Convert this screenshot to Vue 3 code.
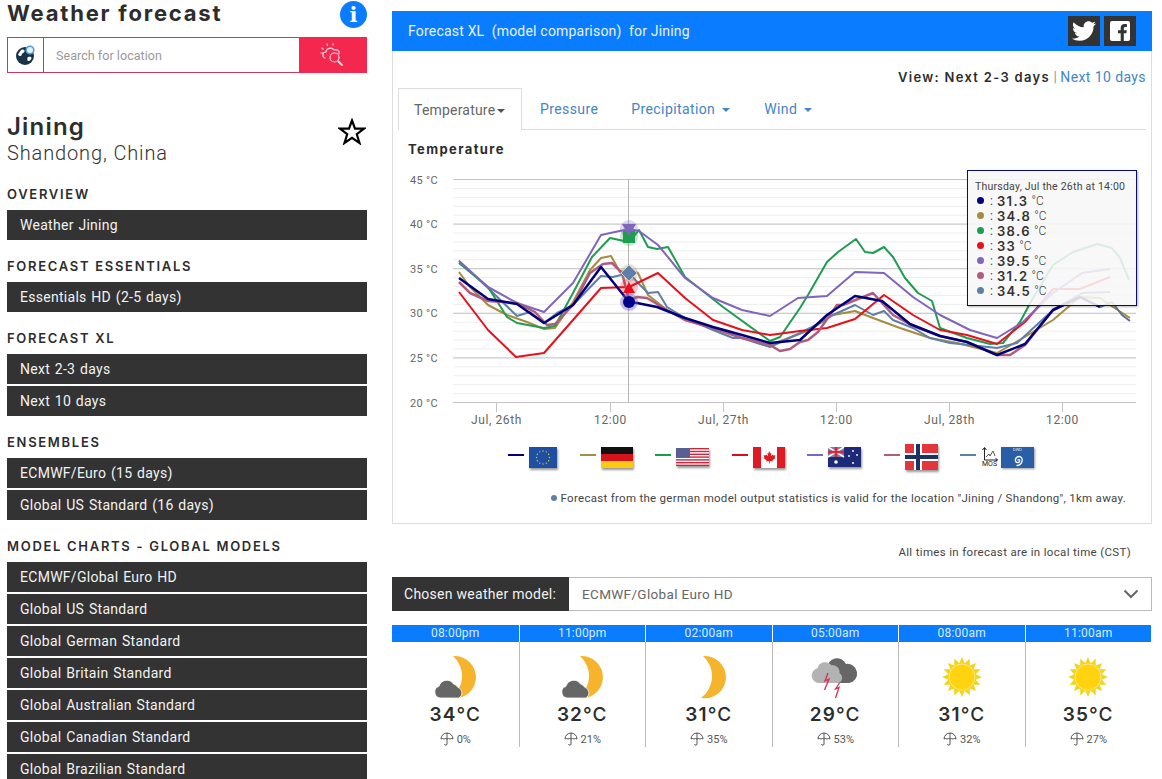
<template>
  <div class="page">
    <aside class="side">
      <div class="brand">
        <h1>Weather forecast</h1>
        <span class="info">i</span>
      </div>
      <div class="search">
        <span class="search-globe">
          <svg width="22" height="22" viewBox="0 0 22 22">
            <circle cx="10" cy="12" r="9" fill="#1b3348" />
            <path d="M6 6c2-1 4 0 3.500 1.500S7 9 6.500 11 4 12 3 10.500zM13 13c2-.5 3.500 0 3.500 1s-1.500 3-3 3-1.500-2.500-.5-4z" fill="#fff" />
            <circle cx="15" cy="6" r="3.800" fill="#dff0fb" stroke="#4f9fd8" stroke-width="1.600" />
          </svg>
        </span>
        <span class="search-text">Search for location</span>
        <span class="search-btn">
          <svg width="28" height="28" viewBox="0 0 28 28" fill="none" stroke="#ffd5de" stroke-width="1.200" stroke-linecap="round">
            <path d="M6 17c-3-1-3-6 1-6 0-4 6-5 8-2 3-1 6 1 5 4" />
            <circle cx="15.500" cy="16.500" r="4.500" />
            <path d="M19 20l4 4" stroke-width="2" />
            <path d="M3 7l1.500 1.500M8 3l.7 2M14 2.500v2M2 12h1.500" stroke-dasharray="1.500 1" />
          </svg>
        </span>
      </div>
      <div class="place">
        <div>
          <div class="city">Jining</div>
          <div class="region">Shandong, China</div>
        </div>
        <svg class="star" width="28" height="27" viewBox="0 0 28 27">
          <polygon points="14,2.500 17,10.600 26,10.600 18.800,16.200 21.500,25 14,19.800 6.500,25 9.200,16.200 2,10.600 11,10.600" fill="#fff" stroke="#000" stroke-width="2.200" />
        </svg>
      </div>
      <section v-for="group in navGroups" :key="group.title" class="nav-group">
        <h2>{{ group.title }}</h2>
        <a v-for="item in group.items" :key="item" class="nav-item">{{ item }}</a>
      </section>
    </aside>

    <main class="main">
      <div class="panel">
        <header class="panel-head">
          <span>Forecast XL&nbsp; (model comparison)&nbsp; for Jining</span>
          <div class="social">
            <a class="social-btn">
              <svg width="24" height="24" viewBox="0 0 24 24"><path fill="#fff" d="M23.954 4.569c-.885.389-1.83.654-2.825.775 1.014-.611 1.794-1.574 2.163-2.723-.951.555-2.005.959-3.127 1.184-.896-.959-2.173-1.559-3.591-1.559-2.717 0-4.92 2.203-4.92 4.917 0 .39.045.765.127 1.124C7.691 8.094 4.066 6.13 1.64 3.161c-.427.722-.666 1.561-.666 2.475 0 1.71.87 3.213 2.188 4.096-.807-.026-1.566-.248-2.228-.616v.061c0 2.385 1.693 4.374 3.946 4.827-.413.111-.849.171-1.296.171-.314 0-.615-.03-.916-.086.631 1.953 2.445 3.377 4.604 3.417-1.68 1.319-3.809 2.105-6.102 2.105-.39 0-.779-.023-1.17-.067 2.189 1.394 4.768 2.209 7.557 2.209 9.054 0 13.999-7.496 13.999-13.986 0-.209 0-.42-.015-.63.961-.689 1.8-1.56 2.46-2.548l-.047-.02z" /></svg>
            </a>
            <a class="social-btn">
              <svg width="20" height="20" viewBox="0 0 20 20">
                <rect width="20" height="20" rx="2" fill="#fff" />
                <path fill="#333" d="M13.800 20v-7.700h2.600l.4-3h-3V7.400c0-.9.300-1.500 1.500-1.500h1.600V3.200c-.3 0-1.200-.1-2.300-.1-2.300 0-3.900 1.400-3.900 4v2.200H8v3h2.700V20z" />
              </svg>
            </a>
          </div>
        </header>

        <div class="view-row">
          <b>View: Next 2-3 days</b> <span class="pipe">|</span> <a>Next 10 days</a>
        </div>

        <nav class="tabs">
          <a class="tab active">Temperature<i class="caret grey"></i></a>
          <a class="tab">Pressure</a>
          <a class="tab">Precipitation <i class="caret"></i></a>
          <a class="tab">Wind <i class="caret"></i></a>
        </nav>

        <h3 class="chart-title">Temperature</h3>

        <div class="chart">
          <svg width="758" height="262" viewBox="393 170 758 262">
            <line v-for="y in minorLines" :key="'m' + y" x1="453" x2="1136" :y1="y" :y2="y" stroke="#eeeeee" />
            <line v-for="t in yTicks" :key="t.y" x1="453" x2="1136" :y1="t.y" :y2="t.y" stroke="#c4c4c4" />
            <text v-for="t in yTicks" :key="'l' + t.y" x="410" :y="t.y + 4" class="axis">{{ t.label }}</text>
            <line v-for="t in xTicks" :key="t.x" :x1="t.x" :x2="t.x" y1="402" y2="412" stroke="#c4c4c4" />
            <text v-for="t in xTicks" :key="'x' + t.x" :x="t.x" y="424" text-anchor="middle" class="axis xlabel">{{ t.label }}</text>
            <line x1="628.500" x2="628.500" y1="179" y2="402" stroke="#b5b5b5" />

            <polyline v-for="s in series" :key="s.name" :points="s.points" fill="none" :stroke="s.color" :stroke-width="s.width" stroke-linejoin="round" />

            <circle cx="629" cy="229" r="9" fill="#8065bd" opacity="0.25" />
            <circle cx="629" cy="237" r="9" fill="#1e9c50" opacity="0.25" />
            <circle cx="629" cy="273" r="9" fill="#a58c3f" opacity="0.25" />
            <circle cx="629" cy="287" r="9" fill="#e8101c" opacity="0.25" />
            <circle cx="629" cy="302" r="9" fill="#8065bd" opacity="0.45" />
            <rect x="623" y="231" width="12" height="12" fill="#1e9c50" />
            <polygon points="622,224 636,224 629,236" fill="#8065bd" />
            <polygon points="629,265 637,273 629,281 621,273" fill="#5f7fa8" stroke="#c9c9d6" />
            <polygon points="629,282 635,293 623,293" fill="#e8101c" />
            <circle cx="629" cy="302" r="6" fill="#00008b" />
          </svg>

          <div class="tooltip">
            <div class="tip-date">Thursday, Jul the 26th at 14:00</div>
            <div v-for="row in tipRows" :key="row.color" class="tip-row">
              <i class="tip-dot" :style="{ background: row.color }"></i>
              <span class="tip-sep">:</span>
              <b>{{ row.value }}</b>
              <span class="tip-unit">°C</span>
            </div>
          </div>
        </div>

        <div class="legend">
          <div class="legend-item">
            <i class="legend-line" style="background:#00006f"></i>
            <svg class="flag" width="28" height="21" viewBox="0 0 28 21">
              <rect width="28" height="21" fill="#1f4fa0" />
              <circle v-for="p in euStars" :key="p.x" :cx="p.x" :cy="p.y" r="0.700" fill="#e7c83a" />
            </svg>
          </div>
          <div class="legend-item">
            <i class="legend-line" style="background:#a58c3f"></i>
            <svg class="flag" width="32" height="21" viewBox="0 0 32 21">
              <rect width="32" height="7" fill="#111" />
              <rect y="7" width="32" height="7" fill="#d8121a" />
              <rect y="14" width="32" height="7" fill="#fcca12" />
            </svg>
          </div>
          <div class="legend-item">
            <i class="legend-line" style="background:#1e9c50"></i>
            <svg class="flag" width="33" height="18" viewBox="0 0 33 18">
              <rect width="33" height="18" fill="#fff" />
              <rect v-for="y in usStripes" :key="y" :y="y" width="33" height="1.400" fill="#c8283c" />
              <rect width="14" height="9.800" fill="#5a5f92" />
            </svg>
          </div>
          <div class="legend-item">
            <i class="legend-line" style="background:#d4101c"></i>
            <svg class="flag" width="32" height="21" viewBox="0 0 32 21">
              <rect width="32" height="21" fill="#fff" />
              <rect width="8" height="21" fill="#e01a22" />
              <rect x="24" width="8" height="21" fill="#e01a22" />
              <path d="M16 4l1.500 2.500 1-.5-.5 3 2-1.500.5 1 2-.2-.8 2 .8.6-3 2.400.4 1.200-3-.4v2.400h-.8v-2.400l-3 .4.400-1.200-3-2.400.8-.6-.8-2 2 .2.500-1 2 1.500-.5-3 1 .5z" fill="#e01a22" />
            </svg>
          </div>
          <div class="legend-item">
            <i class="legend-line" style="background:#8065bd"></i>
            <svg class="flag" width="33" height="20" viewBox="0 0 33 20">
              <rect width="33" height="20" fill="#1c2a78" />
              <rect width="16" height="10" fill="#7a7fa8" />
              <path d="M0 0l16 10M16 0L0 10" stroke="#fff" stroke-width="1.600" />
              <path d="M8 0v10M0 5h16" stroke="#d8283c" stroke-width="2.400" />
              <circle cx="8" cy="15" r="1.800" fill="#fff" />
              <circle cx="25" cy="4" r="0.900" fill="#fff" />
              <circle cx="25" cy="16" r="1" fill="#fff" />
              <circle cx="21" cy="9" r="0.900" fill="#fff" />
              <circle cx="29" cy="8" r="0.900" fill="#fff" />
            </svg>
          </div>
          <div class="legend-item">
            <i class="legend-line" style="background:#b05c80"></i>
            <svg class="flag" width="33" height="26" viewBox="0 0 33 26">
              <rect width="33" height="26" fill="#e4343c" />
              <rect x="9" width="8" height="26" fill="#fff" />
              <rect y="9" width="33" height="8" fill="#fff" />
              <rect x="11" width="4" height="26" fill="#1c3266" />
              <rect y="11" width="33" height="4" fill="#1c3266" />
            </svg>
          </div>
          <div class="legend-item mos">
            <i class="legend-line" style="background:#5f7fa8"></i>
            <div class="mos-icon">
              <svg width="17" height="14" viewBox="0 0 17 14" fill="none" stroke="#222">
                <path d="M3.500 1v12h13" />
                <path d="M1.500 3l2-2.500 2 2.500M14.500 11l2 2-2 1" />
                <path d="M5 10l3-3 1 2 3-5 2 5" stroke="#555" />
              </svg>
              <span>MOS</span>
            </div>
            <div class="dwd">
              <span>DWD</span>
              <svg width="14" height="14" viewBox="0 0 14 14" fill="none" stroke="#fff" stroke-width="1.300" stroke-linecap="round">
                <path d="M7 7c1-1 2 0 1.500 1.500S5 10 4.500 8 5.500 3.500 8 3.500c2 0 4 2 3 5s-3 4-5 4" />
              </svg>
            </div>
          </div>
        </div>

        <p class="note"><i class="note-dot"></i>Forecast from the german model output statistics is valid for the location "Jining / Shandong", 1km away.</p>
      </div>

      <p class="tz">All times in forecast are in local time (CST)</p>

      <div class="model">
        <label>Chosen weather model:</label>
        <div class="model-select">
          <span>ECMWF/Global Euro HD</span>
          <svg width="16" height="10" viewBox="0 0 16 10" fill="none" stroke="#666" stroke-width="2"><path d="M1.500 1.500L8 8l6.500-6.500" /></svg>
        </div>
      </div>

      <div class="hours">
        <div v-for="h in hours" :key="h.time" class="hour">
          <div class="hour-time">{{ h.time }}</div>
          <div class="hour-body">
            <svg width="48" height="48" viewBox="0 0 48 48" class="wx">
              <template v-if="h.icon === 'moonCloud' || h.icon === 'moon'">
                <path :transform="h.icon === 'moon' ? 'translate(-4 0)' : ''" d="M22 3A21.200 21.200 0 1 1 20 45A27 27 0 0 0 22 3z" fill="#f6b42c" />
                <path v-if="h.icon === 'moonCloud'" transform="translate(1.500 0)" d="M8 45a6 6 0 0 1-1.500-11.700A8 8 0 0 1 21 31a5.500 5.500 0 0 1 4 3.100A5.800 5.800 0 0 1 26 45z" fill="#666" stroke="#fff" stroke-width="0.800" />
              </template>
              <template v-else-if="h.icon === 'storm'">
                <path d="M16 30a8 8 0 0 1 0-15a10 10 0 0 1 19-4a9.500 9.500 0 0 1 3 19z" fill="#666" />
                <path d="M8 30a7.500 7.500 0 0 1-1.500-14.800a8 8 0 0 1 14-3a7 7 0 0 1 8 8a5.500 5.500 0 0 1-1 9.800z" fill="#b3b3b3" />
                <path d="M17 20l-3 8 4-2-4.500 11M28.500 30l-4 6 3.500-1.500-3.500 10.500" fill="none" stroke="#dd2c55" stroke-width="1.300" />
              </template>
              <template v-else>
                <polygon :points="sunRays" fill="#f2d41f" />
                <circle cx="24" cy="24" r="13" fill="#ffd30f" stroke="#fbe78a" stroke-width="1" />
              </template>
            </svg>
            <div class="hour-temp">{{ h.temp }}<span>°C</span></div>
            <div class="hour-rain">
              <svg width="14" height="14" viewBox="0 0 14 14" fill="none" stroke="#444" stroke-width="0.900">
                <path d="M1 7a6 6 0 0 1 12 0q-1.500-1-3 0q-1.500-1-3 0q-1.500-1-3 0q-1.500-1-3 0z" />
                <path d="M7 1V12a1.200 1.200 0 0 1-2.400 0" />
              </svg>
              {{ h.rain }}%
            </div>
          </div>
        </div>
      </div>
    </main>
  </div>
</template>

<script setup>
const navGroups = [
  { title: 'OVERVIEW', items: ['Weather Jining'] },
  { title: 'FORECAST ESSENTIALS', items: ['Essentials HD (2-5 days)'] },
  { title: 'FORECAST XL', items: ['Next 2-3 days', 'Next 10 days'] },
  { title: 'ENSEMBLES', items: ['ECMWF/Euro (15 days)', 'Global US Standard (16 days)'] },
  {
    title: 'MODEL CHARTS - GLOBAL MODELS',
    items: [
      'ECMWF/Global Euro HD',
      'Global US Standard',
      'Global German Standard',
      'Global Britain Standard',
      'Global Australian Standard',
      'Global Canadian Standard',
      'Global Brazilian Standard'
    ]
  }
]

const yTicks = [45, 40, 35, 30, 25, 20].map((v, i) => ({ y: 179.5 + i * 44.6, label: `${v} °C` }))
const minorLines = []
for (let y = 179.5; y < 402; y += 8.92) minorLines.push(y)

const xTicks = [
  { x: 496.5, label: 'Jul, 26th' },
  { x: 610.5, label: '12:00' },
  { x: 723.5, label: 'Jul, 27th' },
  { x: 836.5, label: '12:00' },
  { x: 949.5, label: 'Jul, 28th' },
  { x: 1062.5, label: '12:00' }
]

// points are in page pixels, the svg viewBox lines up with them
const series = [
  { name: 'tan', color: '#a58c3f', width: 2, points: '459,272 470,287 488,305 507,315 527,322 544,329 555,328 573,302 590,270 601,258 611,256 620,272 629,270 638,273 648,295 667,310 685,320 713,328 742,338 770,345 810,330 833,315 855,311 873,318 900,328 930,338 957,343 997,353 1023,338 1053,320 1080,297 1100,298 1113,307 1130,318' },
  { name: 'steel', color: '#5f7fa8', width: 2, points: '459,261 488,288 517,316 530,312 544,323 557,313 573,305 601,276 613,277 629,273 640,285 648,293 658,292 667,307 685,318 713,330 733,338 742,338 757,343 770,347 800,333 810,328 833,315 855,305 873,315 884,311 893,320 913,328 930,338 950,343 970,345 997,348 1017,343 1053,310 1082,293 1110,292' },
  { name: 'green', color: '#1e9c50', width: 2, points: '459,263 488,287 507,317 517,323 544,328 555,326 573,293 592,257 610,238 629,242 639,230 648,247 657,249 668,247 685,277 723,307 770,341 780,337 800,308 808,295 827,262 838,252 856,239 865,252 873,253 884,247 893,257 905,278 918,293 932,301 940,328 967,338 990,344 1003,343 1020,322 1033,298 1053,265 1073,252 1097,244 1112,248 1120,258 1129,280' },
  { name: 'red', color: '#e8101c', width: 2, points: '459,292 488,330 516,357 544,353 573,320 601,288 629,287 658,273 685,298 713,320 742,330 770,335 800,331 827,328 855,319 884,295 913,315 940,330 967,335 997,344 1025,322 1053,289 1080,289 1110,277' },
  { name: 'purple', color: '#8065bd', width: 2, points: '459,261 488,287 517,303 544,312 573,283 601,235 629,229 639,231 658,245 685,278 713,298 742,310 770,316 798,298 827,296 855,272 884,273 913,297 940,315 970,330 997,338 1023,322 1053,293 1082,273 1110,269' },
  { name: 'mauve', color: '#b05c80', width: 2.5, points: '459,282 470,293 488,301 517,303 535,312 547,325 555,324 573,305 590,273 603,264 612,263 622,273 629,300 637,297 647,298 667,310 685,320 713,328 742,338 770,345 780,351 790,349 800,342 808,340 818,332 837,305 843,305 873,293 893,315 913,326 940,336 967,342 997,355 1010,355 1025,345 1053,310 1080,297 1100,307' },
  { name: 'navy', color: '#00007a', width: 2.5, points: '459,278 488,299 517,304 544,323 573,305 601,267 629,302 637,303 657,307 685,318 713,327 742,335 770,343 800,340 827,315 855,296 882,301 910,324 940,336 967,342 997,355 1025,344 1053,310 1080,297 1100,307' },
  { name: 'tail', color: '#5f7098', width: 2, points: '1100,307 1112,302 1122,315 1130,321' }
]

const tipRows = [
  { color: '#00007a', value: '31.3' },
  { color: '#a58c3f', value: '34.8' },
  { color: '#1e9c50', value: '38.6' },
  { color: '#e8101c', value: '33' },
  { color: '#8065bd', value: '39.5' },
  { color: '#b05c80', value: '31.2' },
  { color: '#5f7fa8', value: '34.5' }
]

const euStars = Array.from({ length: 12 }, (_, i) => ({
  x: 14 + 6.5 * Math.cos((i * Math.PI) / 6),
  y: 10.5 + 6.5 * Math.sin((i * Math.PI) / 6)
}))
const usStripes = [0, 2.8, 5.6, 8.4, 11.2, 14, 16.6]

const hours = [
  { time: '08:00pm', icon: 'moonCloud', temp: 34, rain: 0 },
  { time: '11:00pm', icon: 'moonCloud', temp: 32, rain: 21 },
  { time: '02:00am', icon: 'moon', temp: 31, rain: 35 },
  { time: '05:00am', icon: 'storm', temp: 29, rain: 53 },
  { time: '08:00am', icon: 'sun', temp: 31, rain: 32 },
  { time: '11:00am', icon: 'sun', temp: 35, rain: 27 }
]

const sunRays = Array.from({ length: 32 }, (_, i) => {
  const r = i % 2 === 0 ? 20 : 14
  const a = (i * Math.PI) / 16
  return `${(24 + r * Math.cos(a)).toFixed(1)},${(24 + r * Math.sin(a)).toFixed(1)}`
}).join(' ')
</script>

<style scoped>
.page { display: flex; gap: 25px; width: 1162px; height: 779px; padding-left: 7px; box-sizing: border-box; overflow: hidden; background: #fff; font-family: Roboto, "Liberation Sans", sans-serif; color: #333; }

.side { width: 360px; flex: none; }
.brand { display: flex; justify-content: space-between; align-items: center; height: 26px; }
.brand h1 { margin: 0; font: 700 22px/24px Inter, sans-serif; letter-spacing: 1.8px; color: #2d2d2d; }
.info { width: 27px; height: 27px; border-radius: 50%; background: #0a7cff; color: #fff; font: 700 21px/27px "DejaVu Serif", serif; text-align: center; margin-top: 2px; }
.search { display: flex; height: 36px; margin-top: 11px; border: 1px solid #c8385f; box-sizing: border-box; }
.search-globe { width: 35px; display: flex; align-items: center; justify-content: center; border-right: 1px solid #c8385f; }
.search-text { flex: 1; padding-left: 12px; font-size: 12.5px; line-height: 36px; color: #999; letter-spacing: .05px; }
.search-btn { width: 68px; margin: -1px; background: #f4284f; display: flex; align-items: center; justify-content: center; }
.place { display: flex; justify-content: space-between; margin-top: 39px; }
.city { font: 600 24px/30px Inter, sans-serif; letter-spacing: 1.2px; color: #2d2d2d; }
.region { font-size: 20px; line-height: 24px; font-weight: 300; letter-spacing: .87px; color: #333; margin-top: -1px; }
.star { margin: 6px 1px 0 0; }
.nav-group { margin-top: 18px; }
.place + .nav-group { margin-top: 21px; }
.nav-group h2 { margin: 0 0 8px; font: 600 13px/16px Inter, sans-serif; letter-spacing: 1.7px; color: #2d2d2d; }
.nav-item { display: block; height: 30px; margin-bottom: 2px; padding-left: 13px; background: #333; color: #f2f2f2; font-size: 14px; line-height: 30px; letter-spacing: .28px; word-spacing: 1px; }
.nav-group .nav-item:last-child { margin-bottom: 0; }

.main { width: 760px; flex: none; padding-top: 11px; }
.panel { border: 1px solid #ddd; border-top: 0; box-sizing: border-box; height: 513px; }
.panel-head { display: flex; justify-content: space-between; align-items: center; height: 40px; margin: 0 -1px; padding: 0 16px; background: #0a7cff; color: #e8f3ff; font-size: 14px; letter-spacing: .2px; }
.social { display: flex; gap: 4px; }
.social-btn { width: 32px; height: 30px; background: #333; display: flex; align-items: center; justify-content: center; }
.view-row { height: 18px; margin-top: 17px; padding-right: 5px; text-align: right; font-size: 14px; line-height: 18px; color: #2d2d2d; }
.view-row b { font: 600 13px/18px Inter, sans-serif; letter-spacing: 1.3px; }
.view-row a, .tab { color: #3f86c8; letter-spacing: .4px; }
.pipe { color: #999; }
.tabs { display: flex; height: 42px; margin: 2px 5px 0; border-bottom: 1px solid #ddd; box-sizing: border-box; font-size: 14px; }
.tab { height: 42px; box-sizing: border-box; padding: 13px 17px 0; line-height: 16px; }
.tab.active + .tab { padding-left: 18px; padding-right: 16px; }
.tab.active { padding: 13px 15px 0; color: #666; letter-spacing: .2px; border: 1px solid #ddd; border-bottom: 0; background: #fff; width: 124px; white-space: nowrap; }
.caret { display: inline-block; margin-left: 3px; vertical-align: 2px; border-top: 4px solid #3f86c8; border-left: 4px solid transparent; border-right: 4px solid transparent; }
.caret.grey { border-top-color: #555; margin-left: 2px; }
.chart-title { margin: 11px 0 0 15px; font: 700 13px/16px Inter, sans-serif; letter-spacing: 1.4px; color: #2d2d2d; }
.chart { position: relative; height: 262px; margin-top: 13px; }
.chart svg { display: block; }
.axis { font: 400 11px Roboto, sans-serif; fill: #666; letter-spacing: .3px; }
.xlabel { font-size: 12px; letter-spacing: .6px; }
.tooltip { position: absolute; left: 574px; top: 0; width: 170px; height: 136px; box-sizing: border-box; padding: 9px 0 0 7px; border: 1px solid #0a0a80; background: rgba(247, 247, 247, .88); box-shadow: 1px 1px 2px rgba(0, 0, 0, .3); }
.tip-date { font-size: 10.5px; line-height: 13px; letter-spacing: .23px; color: #444; }
.tip-row { display: flex; align-items: center; height: 15px; font-size: 12px; color: #444; }
.tip-dot { width: 7px; height: 7px; margin-left: 2px; border-radius: 50%; }
.tip-sep { margin: 0 4px 0 6px; }
.tip-row b { margin-right: 3px; font: 600 13px Inter, sans-serif; letter-spacing: 1.4px; color: #333; }
.tip-unit { font-weight: 300; }
.legend { display: flex; justify-content: center; align-items: center; gap: 22.5px; height: 26px; margin: 12px 2px 0 0; }
.legend-item { display: flex; align-items: center; gap: 5px; }
.legend-line { width: 16px; height: 2px; margin-top: -5px; }
.flag { display: block; filter: drop-shadow(1px 2px 1px rgba(0, 0, 0, .4)); }
.mos-icon { width: 17px; text-align: center; font-size: 7px; line-height: 7px; color: #222; }
.mos-icon svg { display: block; }
.mos-icon span { display: block; }
.dwd { width: 33px; height: 21px; margin-left: -2px; background: #2a5fa8; color: #dde8f8; font-size: 4px; line-height: 6px; text-align: center; filter: drop-shadow(1px 1px 1px rgba(0, 0, 0, .4)); }
.dwd span { display: block; }
.dwd svg { display: block; margin: 0 auto; }
.note { height: 16px; margin: 20px 25px 0 0; text-align: right; font-size: 11.5px; line-height: 16px; letter-spacing: .29px; color: #444; }
.note-dot { display: inline-block; width: 6px; height: 6px; margin-right: 4px; border-radius: 50%; background: #5f7fa8; vertical-align: 1px; }
.tz { height: 16px; margin: 20px 21px 0 0; text-align: right; font-size: 11.5px; line-height: 16px; letter-spacing: .33px; color: #444; }
.model { display: flex; height: 34px; margin-top: 17px; }
.model label { width: 177px; background: #333; color: #f2f2f2; font-size: 14px; line-height: 34px; padding-left: 12px; box-sizing: border-box; letter-spacing: .27px; }
.model-select { flex: 1; display: flex; justify-content: space-between; align-items: center; padding: 0 12px 0 13px; border: 1px solid #bbb; border-left: 0; font-size: 13.5px; letter-spacing: .35px; color: #666; }
.hours { display: grid; grid-template-columns: repeat(6, 1fr); width: 759px; margin-top: 14px; }
.hour + .hour .hour-time { border-left: 1px solid #fff; }
.hour + .hour .hour-body { border-left: 1px solid #bbb; }
.hour-time { height: 17px; background: #0a7cff; color: #dcecff; text-align: center; font-size: 12px; line-height: 17px; letter-spacing: .2px; }
.hour-body { height: 105px; box-sizing: border-box; padding-top: 11px; text-align: center; }
.wx { display: block; margin: 0 auto; }
.hour-temp { margin-top: 2px; font: 600 19px/24px Inter, sans-serif; letter-spacing: 1.1px; color: #2d2d2d; }
.hour-temp span { font-weight: 500; }
.hour-rain { display: flex; justify-content: center; align-items: center; gap: 3px; height: 14px; margin-top: 5px; font-size: 11px; color: #555; }
</style>

<style>
html, body { margin: 0; overflow: hidden; }
</style>
